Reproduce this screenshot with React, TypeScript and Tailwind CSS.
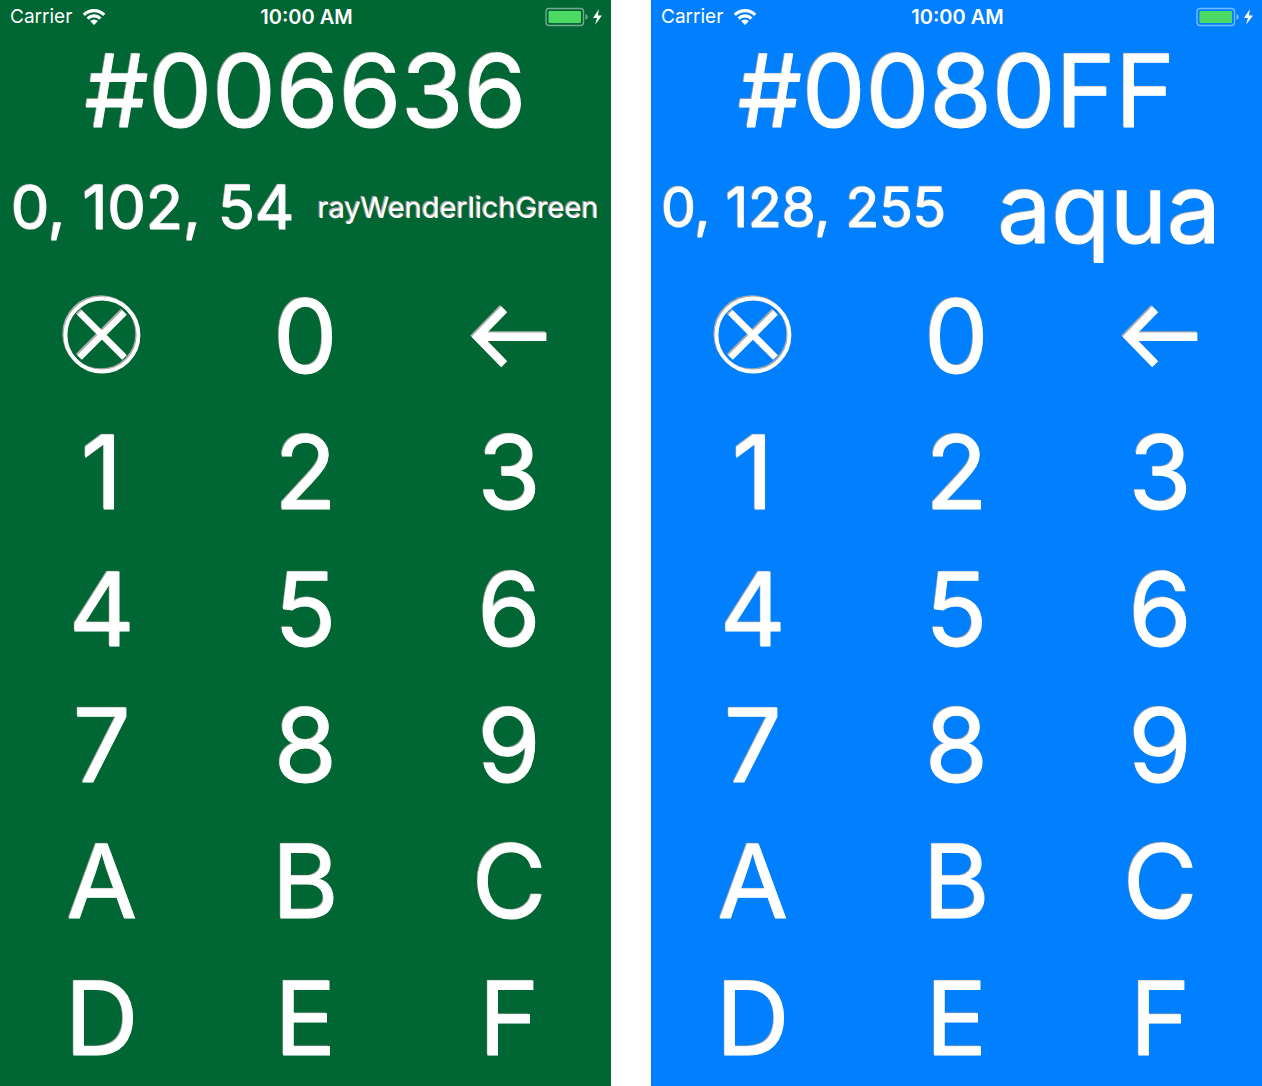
import React from "react";

type Theme = {
  hex: string;
  rgb: string;
  name: string;
  background: string;
  rgbSize: string;
  nameSize: string;
};

const themes: Theme[] = [
  {
    hex: "#006636",
    rgb: "0, 102, 54",
    name: "rayWenderlichGreen",
    background: "bg-[#006633]",
    rgbSize: "text-[61px] [-webkit-text-stroke:1px_#fff]",
    nameSize: "text-[29px]",
  },
  {
    hex: "#0080FF",
    rgb: "0, 128, 255",
    name: "aqua",
    background: "bg-[#0080ff]",
    rgbSize: "text-[55px] [-webkit-text-stroke:1px_#fff]",
    nameSize: "text-[96px] [-webkit-text-stroke:1px_#fff]",
  },
];

const keys = [
  "clear", "0", "back",
  "1", "2", "3",
  "4", "5", "6",
  "7", "8", "9",
  "A", "B", "C",
  "D", "E", "F",
];

function WifiIcon() {
  return (
    <svg width="24" height="18" viewBox="0 0 24 18" aria-hidden="true">
      <g fill="none" stroke="#fff" strokeWidth="3.2">
        <path d="M1.8 6.8A14.4 14.4 0 0 1 22.2 6.8" />
        <path d="M5.6 10.6A9.1 9.1 0 0 1 18.4 10.6" />
      </g>
      <path d="M8.1 13.1A5.5 5.5 0 0 1 15.9 13.1L12 17Z" fill="#fff" />
    </svg>
  );
}

function BatteryIcon() {
  return (
    <svg width="58" height="20" viewBox="0 0 58 20" aria-label="Battery charging" role="img">
      <rect x="1" y="1.5" width="37.5" height="17" rx="3" fill="none" stroke="#fff" strokeOpacity="0.45" strokeWidth="1.4" />
      <rect x="3.5" y="4" width="32.5" height="12" rx="1.2" fill="#4cd964" />
      <path d="M40.5 7C43.4 7.8 43.4 12.2 40.5 13Z" fill="#fff" fillOpacity="0.45" />
      <path d="M53.8 2.2L48 11H52L50 17.8L57 8.4H53Z" fill="#fff" />
    </svg>
  );
}

function ClearIcon() {
  return (
    <svg width="84" height="84" viewBox="0 0 84 84" fill="none" aria-hidden="true">
      <g stroke="#aaa" transform="translate(-1.3 -1.3)">
        <circle cx="42" cy="41" r="36.5" strokeWidth="3.8" />
        <path d="M19.5 18.5L64.5 63.5M64.5 18.5L19.5 63.5" strokeWidth="6.6" />
      </g>
      <g stroke="#fff">
        <circle cx="42" cy="41" r="36.5" strokeWidth="3.8" />
        <path d="M19.5 18.5L64.5 63.5M64.5 18.5L19.5 63.5" strokeWidth="6.6" />
      </g>
    </svg>
  );
}

function BackIcon() {
  return (
    <svg width="84" height="84" viewBox="0 0 84 84" fill="none" aria-hidden="true">
      <g stroke="#aaa" strokeWidth="8.4" transform="translate(-1.3 -1.3)">
        <path d="M37.2 15.2L10.4 42.7L37.2 70.2M11 42.7H79.4" />
      </g>
      <g stroke="#fff" strokeWidth="8.4">
        <path d="M37.2 15.2L10.4 42.7L37.2 70.2M11 42.7H79.4" />
      </g>
    </svg>
  );
}

function StatusBar() {
  return (
    <div className="grid h-[34px] grid-cols-3 items-center pl-2.5 pr-2 text-[19px] leading-6">
      <div className="flex items-center gap-2.5">
        <span>Carrier</span>
        <WifiIcon />
      </div>
      <time className="text-center text-[20px] font-semibold">10:00 AM</time>
      <div className="flex justify-end">
        <BatteryIcon />
      </div>
    </div>
  );
}

function Key({ value }: { value: string }) {
  if (value === "clear") {
    return (
      <button type="button" aria-label="Clear" className="flex items-center justify-center">
        <ClearIcon />
      </button>
    );
  }
  if (value === "back") {
    return (
      <button type="button" aria-label="Backspace" className="flex items-center justify-center">
        <BackIcon />
      </button>
    );
  }
  return (
    <button
      type="button"
      className="flex items-center justify-center text-[102px] leading-none [-webkit-text-stroke:1px_#fff] [text-shadow:-1px_-1px_0_#aaa,-1px_-1px_1px_#aaa]"
    >
      {value}
    </button>
  );
}

function Phone({ theme }: { theme: Theme }) {
  return (
    <section className={`flex min-w-0 flex-1 flex-col text-white ${theme.background}`}>
      <StatusBar />
      <h1 className="flex h-[113px] items-center justify-center whitespace-nowrap text-[101px] leading-none [-webkit-text-stroke:1px_#fff] [text-shadow:-1px_-1px_0_#aaa,-1px_-1px_1px_#aaa]">
        {theme.hex}
      </h1>
      <div className="grid h-[121px] grid-cols-2 items-center whitespace-nowrap text-center [text-shadow:-1px_-1px_0_#aaa,-1px_-1px_1px_#aaa]">
        <p className={`${theme.rgbSize} leading-none`}>{theme.rgb}</p>
        <p className={`${theme.nameSize} leading-none`}>{theme.name}</p>
      </div>
      <div className="grid flex-1 grid-cols-3 grid-rows-6">
        {keys.map((value) => (
          <Key key={value} value={value} />
        ))}
      </div>
    </section>
  );
}

export default function App() {
  return (
    <main className="flex min-h-screen gap-10 bg-white font-['Inter',sans-serif]">
      {themes.map((theme) => (
        <Phone key={theme.hex} theme={theme} />
      ))}
    </main>
  );
}
